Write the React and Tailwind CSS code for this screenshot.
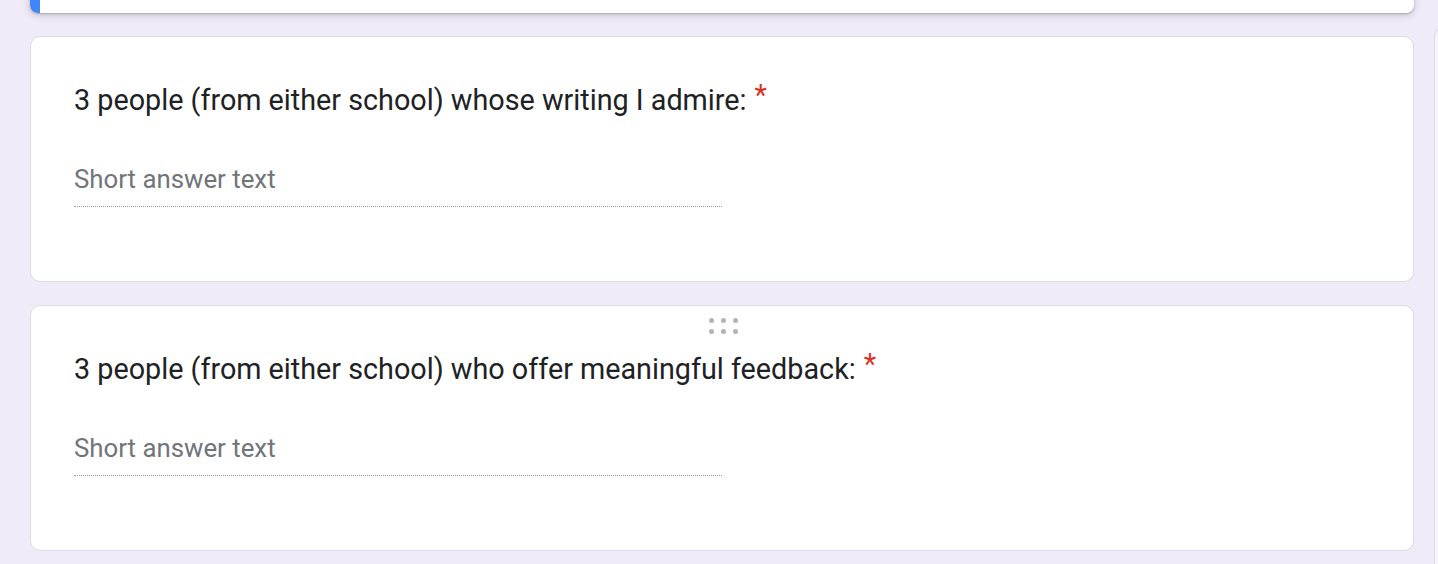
export default function App() {
    const questions = [
        { title: "3 people (from either school) whose writing I admire:", handle: false },
        { title: "3 people (from either school) who offer meaningful feedback:", handle: true },
    ];

    return (
        <div className="relative h-[564px] w-[1438px] overflow-hidden bg-[#f0ebf8] font-['Roboto',sans-serif]">
            {/* right side toolbar, cut off */}
            <div className="absolute left-[1434px] top-[28px] h-[600px] w-[40px] rounded-tl-[8px] border-l border-t border-[#dadce0] bg-[#f7f5fb]"></div>

            <div className="flex flex-col gap-[23px] pl-[30px] pr-[24px]">
                {/* selected card above, mostly scrolled out */}
                <div className="-mt-[40px] flex h-[53px] overflow-hidden rounded-[8px] bg-white shadow-[0_1px_2px_rgba(60,64,67,0.3),0_2px_6px_2px_rgba(60,64,67,0.15)]">
                    <div className="w-[10px] bg-[#4285f4]"></div>
                    <div className="flex-1"></div>
                </div>

                {questions.map((q, i) => (
                    <div key={i} className="h-[246px] rounded-[10px] border border-[#dadce0] bg-white px-[43px] pt-[7px]">
                        <div className="flex h-[26px] items-center justify-center">
                            {q.handle && (
                                <div className="grid grid-cols-3 gap-x-[7px] gap-y-[6px] pl-[2px]">
                                    {[0, 1, 2, 3, 4, 5].map((d) => (
                                        <span key={d} className="block h-[5px] w-[5px] rounded-full bg-[#b3b3b3]"></span>
                                    ))}
                                </div>
                            )}
                        </div>
                        <div className="mt-[14px] flex h-[32px] items-center text-[28.75px] leading-[32px] text-[#202124]">
                            <span>{q.title}</span>
                            <span className="ml-[8px] -mt-[10px] text-[#d93025]">*</span>
                        </div>
                        <div className="mt-[49px] w-[648px] border-b border-dotted border-[#9aa0a6] pb-[13px]">
                            <div className="h-[28px] text-[25.8px] leading-[28px] text-[#70757a]">Short answer text</div>
                        </div>
                    </div>
                ))}
            </div>
        </div>
    );
}
